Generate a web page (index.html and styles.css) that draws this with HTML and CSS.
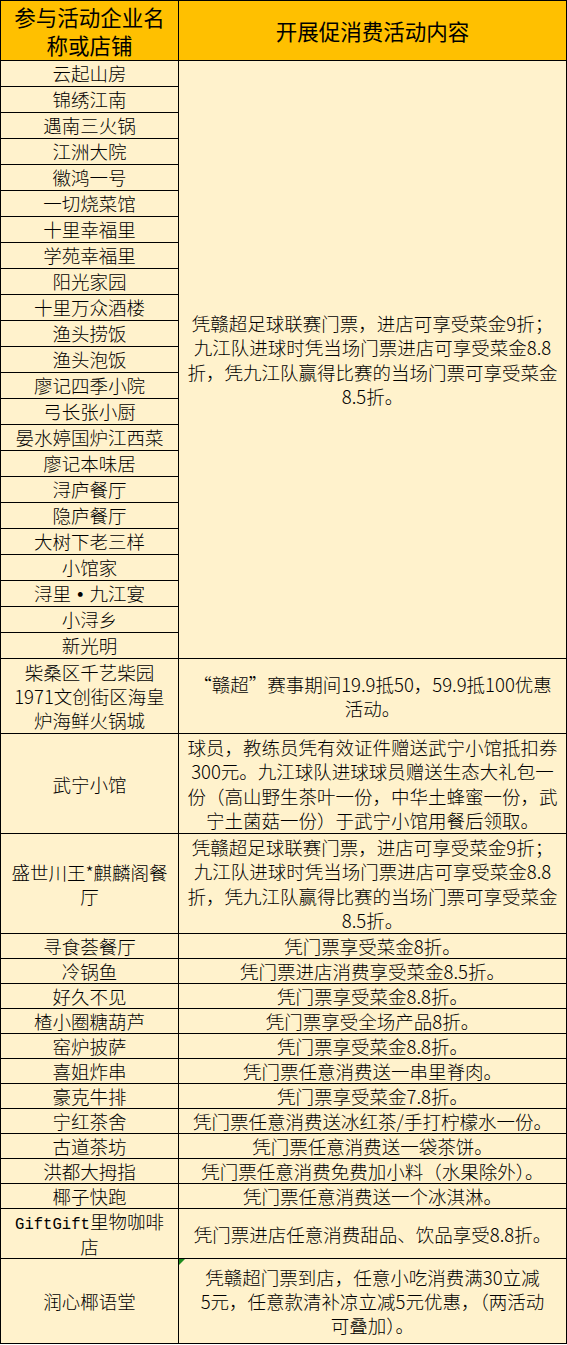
FILE: index.html
```html
<!DOCTYPE html>
<html lang="zh-CN">
<head>
<meta charset="utf-8">
<title>参与活动企业名称或店铺</title>
<link rel="stylesheet" href="styles.css">
</head>
<body>
<table class="sheet">
  <colgroup>
    <col class="col-name">
    <col class="col-offer">
  </colgroup>
  <thead>
    <tr class="row-head">
      <th>参与活动企业名<br>称或店铺</th>
      <th>开展促消费活动内容</th>
    </tr>
  </thead>
  <tbody>
    <tr class="row-26"><td class="name">云起山房</td><td class="offer" rowspan="23">凭赣超足球联赛门票，进店可享受菜金9折；<br>九江队进球时凭当场门票进店可享受菜金8.8<br>折，凭九江队赢得比赛的当场门票可享受菜金<br>8.5折。</td></tr>
    <tr class="row-26"><td class="name">锦绣江南</td></tr>
    <tr class="row-26"><td class="name">遇南三火锅</td></tr>
    <tr class="row-26"><td class="name">江洲大院</td></tr>
    <tr class="row-26"><td class="name">徽鸿一号</td></tr>
    <tr class="row-26"><td class="name">一切烧菜馆</td></tr>
    <tr class="row-26"><td class="name">十里幸福里</td></tr>
    <tr class="row-26"><td class="name">学苑幸福里</td></tr>
    <tr class="row-26"><td class="name">阳光家园</td></tr>
    <tr class="row-26"><td class="name">十里万众酒楼</td></tr>
    <tr class="row-26"><td class="name">渔头捞饭</td></tr>
    <tr class="row-26"><td class="name">渔头泡饭</td></tr>
    <tr class="row-26"><td class="name">廖记四季小院</td></tr>
    <tr class="row-26"><td class="name">弓长张小厨</td></tr>
    <tr class="row-26"><td class="name">晏水婷国炉江西菜</td></tr>
    <tr class="row-26"><td class="name">廖记本味居</td></tr>
    <tr class="row-26"><td class="name">浔庐餐厅</td></tr>
    <tr class="row-26"><td class="name">隐庐餐厅</td></tr>
    <tr class="row-26"><td class="name">大树下老三样</td></tr>
    <tr class="row-26"><td class="name">小馆家</td></tr>
    <tr class="row-26"><td class="name">浔里<span class="dot">•</span>九江宴</td></tr>
    <tr class="row-26"><td class="name">小浔乡</td></tr>
    <tr class="row-26"><td class="name">新光明</td></tr>
    <tr class="row-75"><td class="name">柴桑区千艺柴园<br>1971文创街区海皇<br>炉海鲜火锅城</td><td class="offer">“赣超”赛事期间19.9抵50，59.9抵100优惠<br>活动。</td></tr>
    <tr class="row-100"><td class="name">武宁小馆</td><td class="offer">球员，教练员凭有效证件赠送武宁小馆抵扣券<br>300元。九江球队进球球员赠送生态大礼包一<br>份（高山野生茶叶一份，中华土蜂蜜一份，武<br>宁土菌菇一份）于武宁小馆用餐后领取。</td></tr>
    <tr class="row-100"><td class="name">盛世川王*麒麟阁餐<br>厅</td><td class="offer">凭赣超足球联赛门票，进店可享受菜金9折；<br>九江队进球时凭当场门票进店可享受菜金8.8<br>折，凭九江队赢得比赛的当场门票可享受菜金<br>8.5折。</td></tr>
    <tr class="row-25"><td class="name">寻食荟餐厅</td><td class="offer">凭门票享受菜金8折。</td></tr>
    <tr class="row-25"><td class="name">冷锅鱼</td><td class="offer">凭门票进店消费享受菜金8.5折。</td></tr>
    <tr class="row-25"><td class="name">好久不见</td><td class="offer">凭门票享受菜金8.8折。</td></tr>
    <tr class="row-25"><td class="name">楂小圈糖葫芦</td><td class="offer">凭门票享受全场产品8折。</td></tr>
    <tr class="row-25"><td class="name">窑炉披萨</td><td class="offer">凭门票享受菜金8.8折。</td></tr>
    <tr class="row-25"><td class="name">喜姐炸串</td><td class="offer">凭门票任意消费送一串里脊肉。</td></tr>
    <tr class="row-25"><td class="name">豪克牛排</td><td class="offer">凭门票享受菜金7.8折。</td></tr>
    <tr class="row-25"><td class="name">宁红茶舍</td><td class="offer">凭门票任意消费送冰红茶/手打柠檬水一份。</td></tr>
    <tr class="row-25"><td class="name">古道茶坊</td><td class="offer">凭门票任意消费送一袋茶饼。</td></tr>
    <tr class="row-25"><td class="name">洪都大拇指</td><td class="offer">凭门票任意消费免费加小料（水果除外）。</td></tr>
    <tr class="row-25"><td class="name">椰子快跑</td><td class="offer">凭门票任意消费送一个冰淇淋。</td></tr>
    <tr class="row-50"><td class="name"><span class="mono">GiftGift</span>里物咖啡<br>店</td><td class="offer">凭门票进店任意消费甜品、饮品享受8.8折。</td></tr>
    <tr class="row-85"><td class="name">润心椰语堂</td><td class="offer flagged">凭赣超门票到店，任意小吃消费满30立减<br>5元，任意款清补凉立减5元优惠，（两活动<br>可叠加）。</td></tr>
  </tbody>
</table>
</body>
</html>
```

FILE: styles.css
```css
html,
body {
  margin: 0;
  padding: 0;
  background: #ffffff;
}

.sheet {
  border-collapse: collapse;
  table-layout: fixed;
  width: 566px;
  background: #fff2cc;
  color: #000000;
  font-family: "Noto Sans CJK SC", sans-serif;
  font-size: 18.5px;
  font-weight: 300;
  line-height: 24px;
}

.col-name {
  width: 178px;
}

.col-offer {
  width: 388px;
}

.sheet th,
.sheet td {
  border: 1px solid #000000;
  padding: 0;
  text-align: center;
  vertical-align: middle;
}

.sheet th {
  background: #ffc000;
  font-size: 21.5px;
  font-weight: 400;
  line-height: 28px;
}

.sheet .offer {
  white-space: nowrap;
  padding: 0 1px;
}

.sheet .name {
  white-space: nowrap;
}

.row-head { height: 60px; }
.row-26 { height: 26px; }
.row-25 { height: 25px; }
.row-50 { height: 50px; }
.row-75 { height: 75px; }
.row-85 { height: 85px; }
.row-100 { height: 100px; }

.row-25 td,
.row-26 td {
  line-height: 23px;
}

.row-26 .offer,
.row-100 .offer {
  line-height: 24.5px;
}

.dot {
  display: inline-block;
  width: 1em;
  line-height: 1;
  text-align: center;
  font-weight: 700;
}

.mono {
  font-family: "Liberation Mono", monospace;
  font-size: 15.6px;
  font-weight: 400;
  line-height: 1;
}

.flagged {
  position: relative;
}

.flagged::before {
  content: "";
  position: absolute;
  top: 0;
  left: 0;
  border-top: 6px solid #1e8c1e;
  border-right: 6px solid transparent;
}
```
